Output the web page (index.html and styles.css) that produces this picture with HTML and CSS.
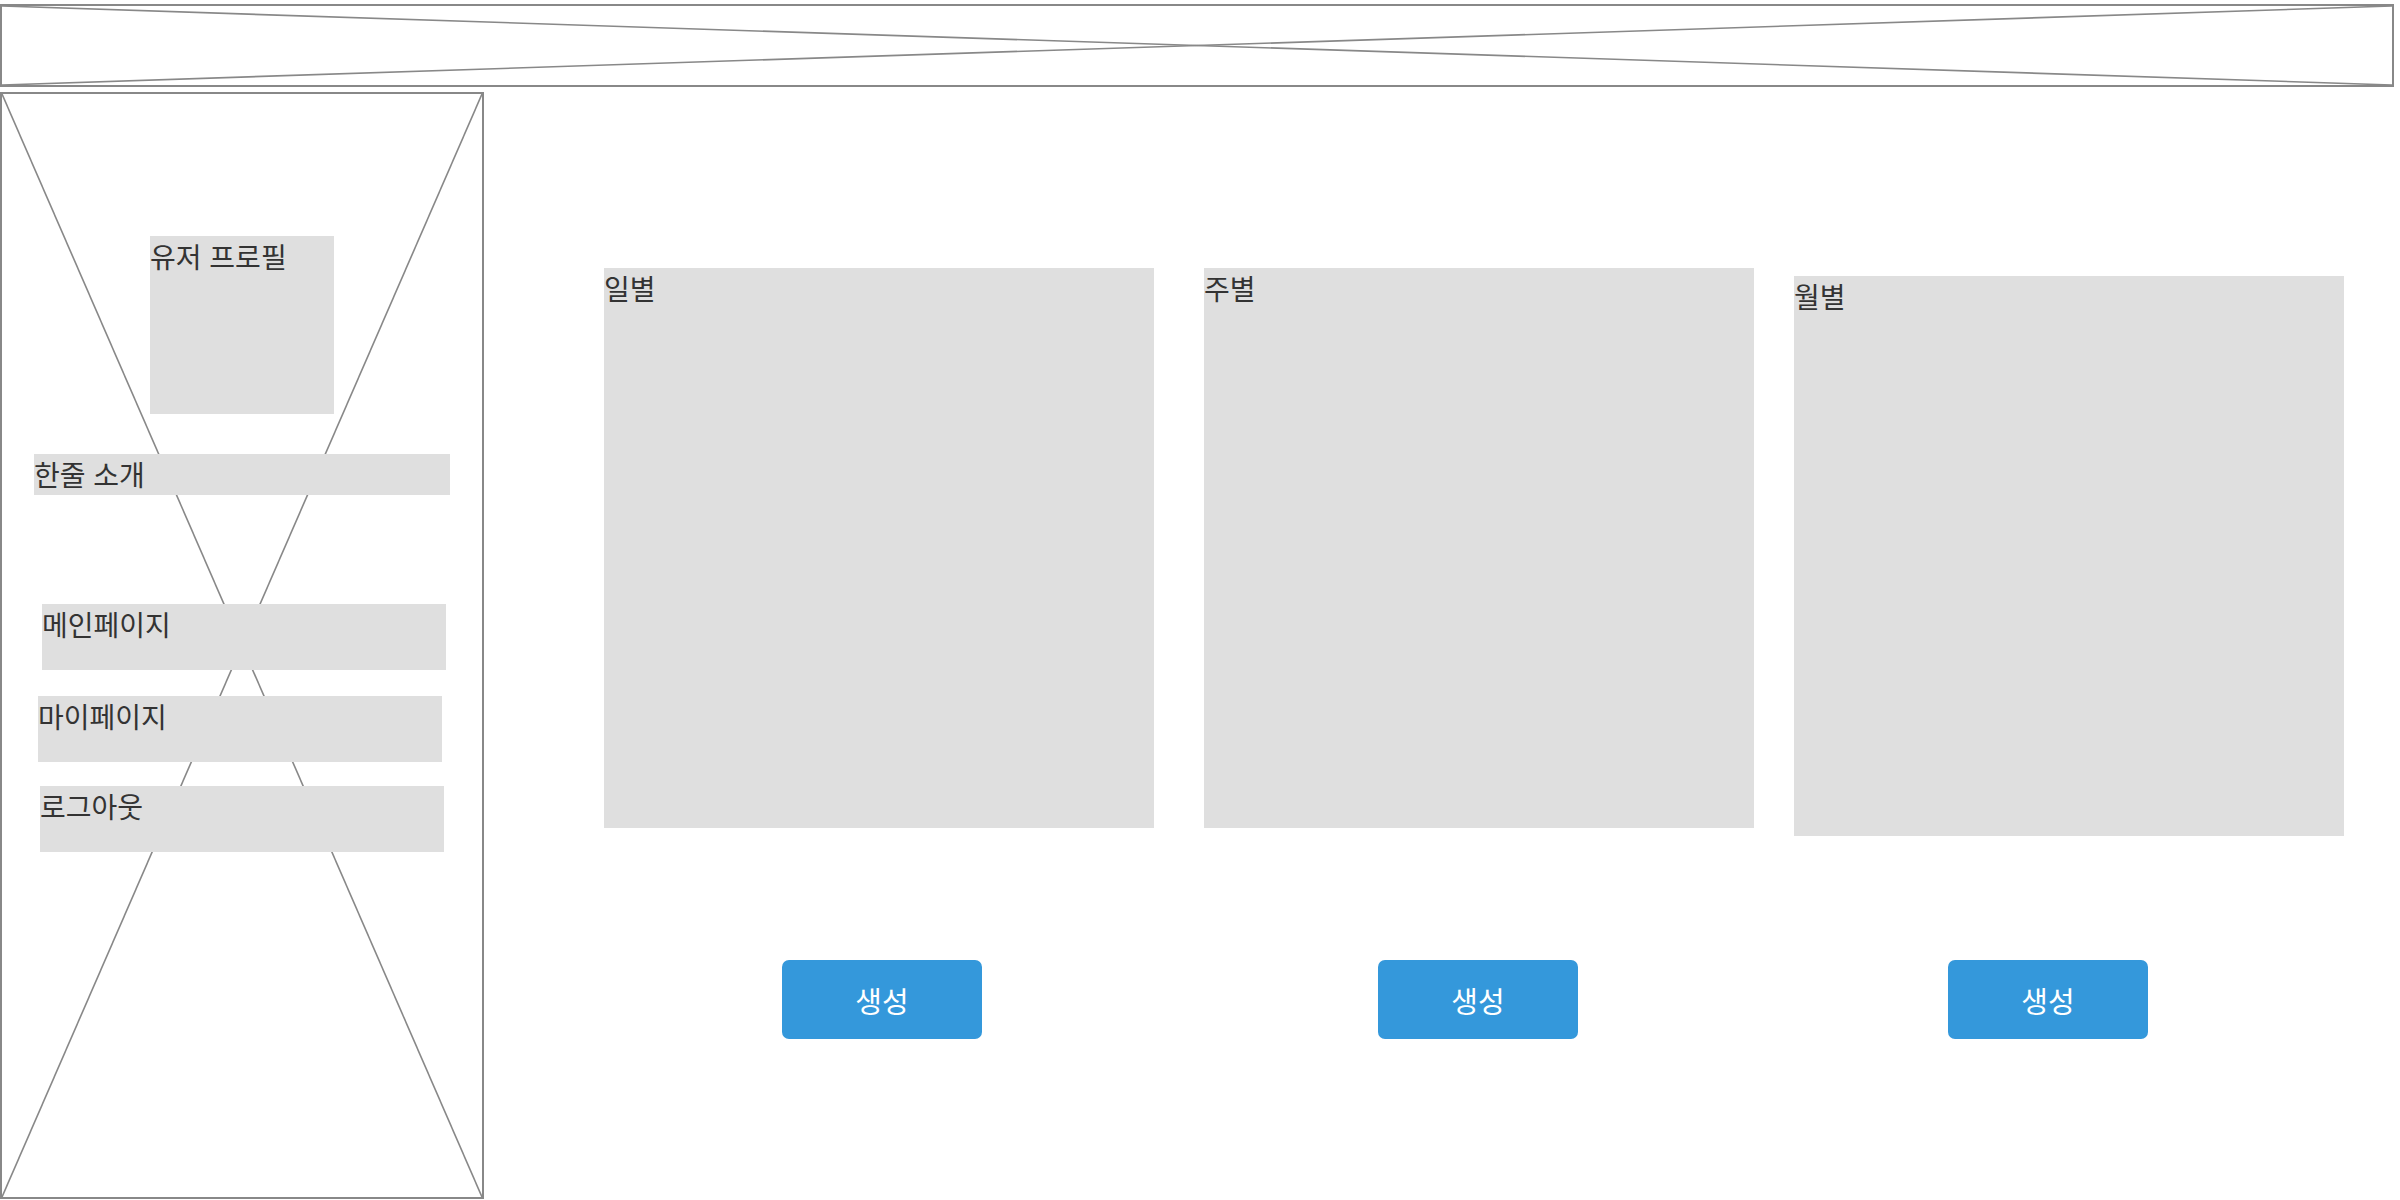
FILE: index.html
```html
<!DOCTYPE html>
<html lang="ko">
<head>
<meta charset="utf-8">
<title>Wireframe</title>
<link rel="stylesheet" href="styles.css">
</head>
<body>
<div class="page">
  <header class="header">
    <svg class="xmark" viewBox="0 0 100 100" preserveAspectRatio="none">
      <line x1="0" y1="0" x2="100" y2="100" vector-effect="non-scaling-stroke"/>
      <line x1="0" y1="100" x2="100" y2="0" vector-effect="non-scaling-stroke"/>
    </svg>
  </header>
  <div class="body-row">
    <aside class="sidebar">
      <svg class="xmark xmark--overlay" viewBox="0 0 100 100" preserveAspectRatio="none">
        <line x1="0" y1="0" x2="100" y2="100" vector-effect="non-scaling-stroke"/>
        <line x1="0" y1="100" x2="100" y2="0" vector-effect="non-scaling-stroke"/>
      </svg>
      <div class="side-content">
        <div class="box profile">유저 프로필</div>
        <div class="box intro">한줄 소개</div>
        <div class="box nav nav--main">메인페이지</div>
        <div class="box nav nav--my">마이페이지</div>
        <div class="box nav nav--logout">로그아웃</div>
      </div>
    </aside>
    <main class="main">
      <div class="cards">
        <div class="box card card--day">일별</div>
        <div class="box card card--week">주별</div>
        <div class="box card card--month">월별</div>
      </div>
      <div class="buttons">
        <button class="btn btn--day">생성</button>
        <button class="btn btn--week">생성</button>
        <button class="btn btn--month">생성</button>
      </div>
    </main>
  </div>
</div>
</body>
</html>
```
FILE: styles.css
```css
html, body {
  margin: 0;
  padding: 0;
  background: #ffffff;
}
body {
  font-family: "Noto Sans CJK KR", "Noto Sans", sans-serif;
  color: #333333;
  overflow: hidden;
}
.page {
  padding-top: 4px;
  width: 2400px;
  height: 1196px;
}
.header {
  box-sizing: border-box;
  width: 2394px;
  height: 83px;
  border: 2px solid #888888;
  display: block;
}
.xmark {
  display: block;
  width: 100%;
  height: 100%;
}
.xmark line {
  stroke: #888888;
  stroke-width: 1.6;
}
.body-row {
  display: flex;
  margin-top: 5px;
}
.sidebar {
  position: relative;
  box-sizing: border-box;
  width: 484px;
  height: 1107px;
  border: 2px solid #888888;
  flex: none;
}
.xmark--overlay {
  position: absolute;
  inset: 0;
}
.side-content {
  position: relative;
  display: flex;
  flex-direction: column;
  align-items: flex-start;
}
.box {
  background: #dfdfdf;
  font-size: 28px;
  line-height: normal;
  color: #333333;
  box-sizing: border-box;
}
.profile {
  width: 184px;
  height: 178px;
  margin-left: 148px;
  margin-top: 142px;
}
.intro {
  width: 416px;
  height: 41px;
  margin-left: 32px;
  margin-top: 40px;
  overflow: hidden;
}
.nav {
  width: 404px;
  height: 66px;
}
.nav--main {
  margin-left: 40px;
  margin-top: 109px;
}
.nav--my {
  margin-left: 36px;
  margin-top: 26px;
}
.nav--logout {
  margin-left: 38px;
  margin-top: 24px;
}
.main {
  flex: 1;
  display: flex;
  flex-direction: column;
}
.cards {
  display: flex;
  align-items: flex-start;
  margin-top: 176px;
}
.card {
  width: 550px;
  height: 560px;
  flex: none;
}
.card--day {
  margin-left: 120px;
}
.card--week {
  margin-left: 50px;
}
.card--month {
  margin-left: 40px;
  margin-top: 8px;
}
.buttons {
  display: flex;
  margin-top: 124px;
}
.btn {
  width: 200px;
  height: 79px;
  flex: none;
  border: none;
  border-radius: 7px;
  background: #3498db;
  color: #ffffff;
  font-family: "Noto Sans CJK KR", "Noto Sans", sans-serif;
  font-size: 29px;
  padding: 0;
  display: flex;
  align-items: center;
  justify-content: center;
}
.btn--day {
  margin-left: 298px;
}
.btn--week {
  margin-left: 396px;
}
.btn--month {
  margin-left: 370px;
}
```
